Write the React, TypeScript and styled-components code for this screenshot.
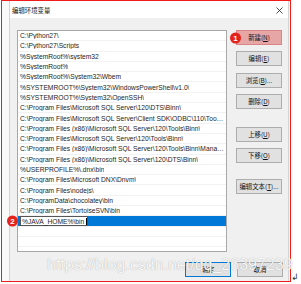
import React from 'react';
import styled, { createGlobalStyle } from 'styled-components';

const GlobalStyle = createGlobalStyle`
  html, body {
    margin: 0;
    padding: 0;
    background: #ffffff;
  }
  body {
    font-family: "Liberation Sans", "Noto Sans CJK SC", sans-serif;
  }
`;

const Page = styled.div`
  position: relative;
  width: 301px;
  height: 284px;
  overflow: hidden;
`;

const Frame = styled.div`
  position: relative;
  box-sizing: border-box;
  margin-left: 1px;
  width: 290px;
  height: 282px;
  border: 1px solid #f01c1c;
  background: #fafafa;
  display: flex;
`;

const Dialog = styled.div`
  box-sizing: border-box;
  margin-left: 7px;
  width: 280px;
  display: flex;
  flex-direction: column;
  border-left: 1px solid #d4d4d4;
  border-right: 1px solid #d4d4d4;
  background: #f0f0f0;
`;

const TitleBar = styled.div`
  height: 17px;
  flex: none;
  display: flex;
  align-items: center;
  justify-content: space-between;
  padding: 0 5px 0 2px;
  background: #ffffff;
`;

const Title = styled.span`
  font-family: "Noto Sans CJK SC", sans-serif;
  font-size: 6.4px;
  color: #111;
  margin-top: 2px;
`;

const Body = styled.div`
  flex: 1;
  display: flex;
  flex-direction: column;
  padding: 12px 5px 0 7px;
`;

const Main = styled.div`
  display: flex;
  gap: 9px;
  height: 222px;
`;

const ListBox = styled.div`
  box-sizing: border-box;
  width: 210px;
  height: 222px;
  border: 1px solid #a8a8a8;
  background: #ffffff;
  display: flex;
  flex-direction: column;
`;

const Row = styled.div<{ $editing?: boolean }>`
  position: relative;
  box-sizing: border-box;
  flex: none;
  height: 10.3px;
  display: flex;
  align-items: center;
  padding-left: 2px;
  border-bottom: 1px solid #f2f2f2;
  font-size: 6.7px;
  color: #1e1e1e;
  background: ${(p) => (p.$editing ? '#0078d7' : 'transparent')};
`;

const Filler = styled.div`
  flex: 1;
  min-height: 0;
`;

const RowText = styled.span`
  display: block;
  white-space: nowrap;
  overflow: hidden;
  text-overflow: ellipsis;
  max-width: 204px;
`;

const EditBox = styled.span`
  box-sizing: border-box;
  height: 10px;
  width: 68px;
  display: flex;
  align-items: center;
  padding-left: 1px;
  background: #ffffff;
  border: 1px solid #555;
  white-space: nowrap;
`;

const Caret = styled.span`
  display: inline-block;
  width: 1px;
  height: 7px;
  margin-left: 1.5px;
  background: #000;
`;

const Badge = styled.span<{ $left: number }>`
  position: absolute;
  left: ${(p) => p.$left}px;
  top: 50%;
  transform: translateY(-50%);
  width: 11px;
  height: 11px;
  border-radius: 50%;
  background: #e3231c;
  color: #ffffff;
  font-family: "Liberation Sans", sans-serif;
  font-weight: bold;
  font-size: 8px;
  display: flex;
  align-items: center;
  justify-content: center;
  z-index: 2;
`;

const SideButtons = styled.div`
  display: flex;
  flex-direction: column;
  gap: 6.4px;
  width: 46px;
`;

const Button = styled.div<{ $tone?: 'mark' | 'default'; $spaced?: number }>`
  position: relative;
  box-sizing: border-box;
  flex: none;
  width: 46px;
  height: 15px;
  margin-top: ${(p) => p.$spaced ?? 0}px;
  display: flex;
  align-items: center;
  justify-content: center;
  font-family: "Noto Sans CJK SC", sans-serif;
  font-size: 6.4px;
  color: #111;
  background: ${(p) => (p.$tone === 'mark' ? '#e6a6a6' : '#e1e1e1')};
  border: 1px solid
    ${(p) => (p.$tone === 'mark' ? '#d98585' : p.$tone === 'default' ? '#0078d7' : '#adadad')};
  u {
    text-decoration: underline;
    text-underline-offset: 1px;
  }
`;

const Footer = styled.div`
  display: flex;
  justify-content: flex-end;
  gap: 6px;
  margin-top: 10px;
`;

const Close = styled.svg`
  width: 7px;
  height: 7px;
  margin-top: 2px;
`;

const Watermark = styled.div`
  position: absolute;
  left: 45px;
  top: 255px;
  font-family: "Liberation Sans", sans-serif;
  font-size: 16px;
  color: rgba(255, 255, 255, 0.92);
  text-shadow: 0 0 1px rgba(0, 0, 0, 0.35);
  white-space: nowrap;
  pointer-events: none;
`;

const ReturnMark = styled.span`
  position: absolute;
  left: 291px;
  top: 272px;
  font-family: "DejaVu Sans", sans-serif;
  font-size: 9px;
  color: #333;
`;

const paths = [
  'C:\\Python27\\',
  'C:\\Python27\\Scripts',
  '%SystemRoot%\\system32',
  '%SystemRoot%',
  '%SystemRoot%\\System32\\Wbem',
  '%SYSTEMROOT%\\System32\\WindowsPowerShell\\v1.0\\',
  '%SYSTEMROOT%\\System32\\OpenSSH\\',
  'C:\\Program Files\\Microsoft SQL Server\\120\\DTS\\Binn\\',
  'C:\\Program Files\\Microsoft SQL Server\\Client SDK\\ODBC\\110\\Tools\\Binn\\',
  'C:\\Program Files (x86)\\Microsoft SQL Server\\120\\Tools\\Binn\\',
  'C:\\Program Files\\Microsoft SQL Server\\120\\Tools\\Binn\\',
  'C:\\Program Files (x86)\\Microsoft SQL Server\\120\\Tools\\Binn\\ManagementStudio\\',
  'C:\\Program Files (x86)\\Microsoft SQL Server\\120\\DTS\\Binn\\',
  '%USERPROFILE%\\.dnx\\bin',
  'C:\\Program Files\\Microsoft DNX\\Dnvm\\',
  'C:\\Program Files\\nodejs\\',
  'C:\\ProgramData\\chocolatey\\bin',
  'C:\\Program Files\\TortoiseSVN\\bin',
];

const sideButtons = [
  { label: '新建', key: 'N', tone: 'mark' as const, badge: '1' },
  { label: '编辑', key: 'E' },
  { label: '浏览', key: 'B', tail: '...' },
  { label: '删除', key: 'D' },
  { label: '上移', key: 'U', spaced: 11 },
  { label: '下移', key: 'O' },
  { label: '编辑文本', key: 'T', tail: '...', spaced: 9.5 },
];

function App() {
  return (
    <Page>
      <GlobalStyle />
      <Frame>
        <Dialog>
          <TitleBar>
            <Title>编辑环境变量</Title>
            <Close viewBox="0 0 7 7">
              <path d="M0.5 0.5 L6.5 6.5 M6.5 0.5 L0.5 6.5" stroke="#222" strokeWidth="0.8" />
            </Close>
          </TitleBar>
          <Body>
            <Main>
              <ListBox>
                {paths.map((p) => (
                  <Row key={p}>
                    <RowText>{p}</RowText>
                  </Row>
                ))}
                <Row $editing>
                  <Badge $left={-11}>2</Badge>
                  <EditBox>
                    %JAVA_HOME%\bin
                    <Caret />
                  </EditBox>
                </Row>
                <Row />
                <Row />
                <Filler />
              </ListBox>
              <SideButtons>
                {sideButtons.map((b) => (
                  <Button key={b.label} $tone={b.tone} $spaced={b.spaced}>
                    {b.badge && <Badge $left={-7}>{b.badge}</Badge>}
                    {b.label}(<u>{b.key}</u>){b.tail}
                  </Button>
                ))}
              </SideButtons>
            </Main>
            <Footer>
              <Button $tone="default">确定</Button>
              <Button>取消</Button>
            </Footer>
          </Body>
        </Dialog>
        <Watermark>https://blog.csdn.net/qq_26397239</Watermark>
      </Frame>
      <ReturnMark>↲</ReturnMark>
    </Page>
  );
}

export default App;
